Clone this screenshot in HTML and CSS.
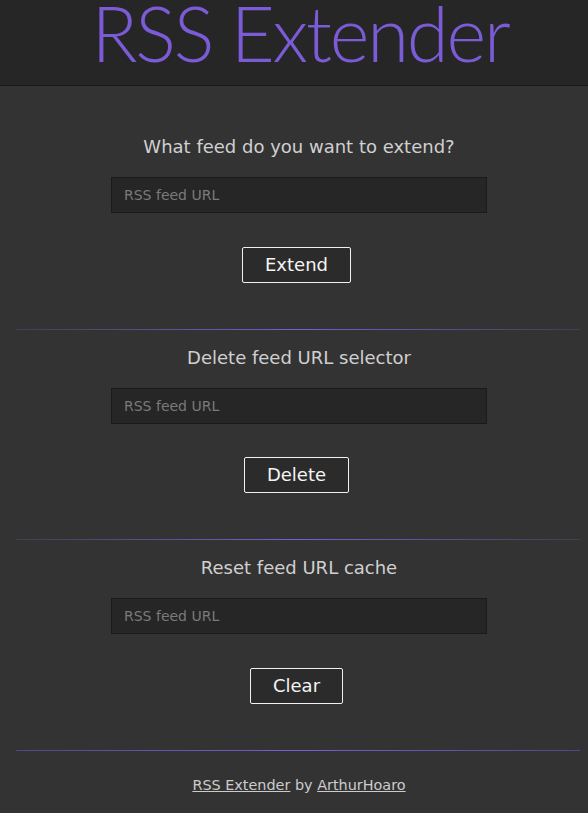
FILE: index.html
```html
<!DOCTYPE html>
<html lang="en">
<head>
<meta charset="utf-8">
<title>RSS Extender</title>
<link rel="stylesheet" href="styles.css">
</head>
<body>
<header class="site-header">
  <h1 class="title">RSS Extender</h1>
</header>
<main class="content">
  <section class="block">
    <h2 class="block-title">What feed do you want to extend?</h2>
    <input class="field" type="text" placeholder="RSS feed URL">
    <button class="btn" type="button">Extend</button>
  </section>
  <hr class="sep">
  <section class="block">
    <h2 class="block-title">Delete feed URL selector</h2>
    <input class="field" type="text" placeholder="RSS feed URL">
    <button class="btn btn-narrow" type="button">Delete</button>
  </section>
  <hr class="sep">
  <section class="block">
    <h2 class="block-title">Reset feed URL cache</h2>
    <input class="field" type="text" placeholder="RSS feed URL">
    <button class="btn" type="button">Clear</button>
  </section>
  <hr class="sep sep-footer">
</main>
<footer class="site-footer">
  <a href="#">RSS Extender</a> by <a href="#">ArthurHoaro</a>
</footer>
</body>
</html>
```

FILE: styles.css
```css
html, body {
  margin: 0;
  padding: 0;
}
body {
  background: #333333;
  color: #d0d0d0;
  font-family: "DejaVu Sans", "Liberation Sans", sans-serif;
}
.site-header {
  height: 85px;
  box-sizing: content-box;
  padding-left: 12px;
  background: #262626;
  border-bottom: 1px solid #191919;
  display: flex;
  justify-content: center;
  align-items: flex-start;
}
.title {
  margin: 0;
  font-family: "Lato", sans-serif;
  font-weight: 300;
  font-size: 76px;
  line-height: 66px;
  color: #7b5bd6;
  letter-spacing: -2.2px;
}
.content {
  padding: 50px 8px 0 16px;
}
.block {
  display: flex;
  flex-direction: column;
  align-items: center;
  padding-left: 2px;
}
.block-title {
  margin: 0;
  font-size: 18px;
  line-height: 22px;
  font-weight: normal;
  color: #d0d0d0;
}
.field {
  margin-top: 19px;
  width: 376px;
  height: 36px;
  box-sizing: border-box;
  background: #262626;
  border: 1px solid #1a1a1a;
  padding: 0 12px;
  font-family: "DejaVu Sans", sans-serif;
  font-size: 14px;
  color: #ddd;
  outline: none;
}
.field::placeholder {
  color: #7a7a7a;
}
.btn {
  margin-top: 34px;
  margin-right: 5px;
  height: 36px;
  box-sizing: border-box;
  padding: 0 22px;
  background: #2b2b2b;
  border: 1px solid #f0f0f0;
  border-radius: 2px;
  color: #f4f4f4;
  font-family: "DejaVu Sans", sans-serif;
  font-size: 18px;
  line-height: 20px;
  cursor: pointer;
}
.btn-narrow {
  margin-top: 33px;
}
.sep {
  margin: 46px 0 17px;
  border: 0;
  height: 1px;
  background: linear-gradient(to right, rgba(90, 80, 120, 0.4), #7b5bd6 50%, rgba(90, 80, 120, 0.4));
}
.sep-footer {
  margin-bottom: 0;
  background: linear-gradient(to right, rgba(110, 80, 190, 0.6), #7b5bd6 50%, rgba(110, 80, 190, 0.6));
}
.site-footer {
  padding: 25px 0 10px 10px;
  text-align: center;
  font-size: 14.4px;
  line-height: 18px;
  color: #cccccc;
}
.site-footer a {
  color: #cccccc;
  text-decoration: underline;
}
```
